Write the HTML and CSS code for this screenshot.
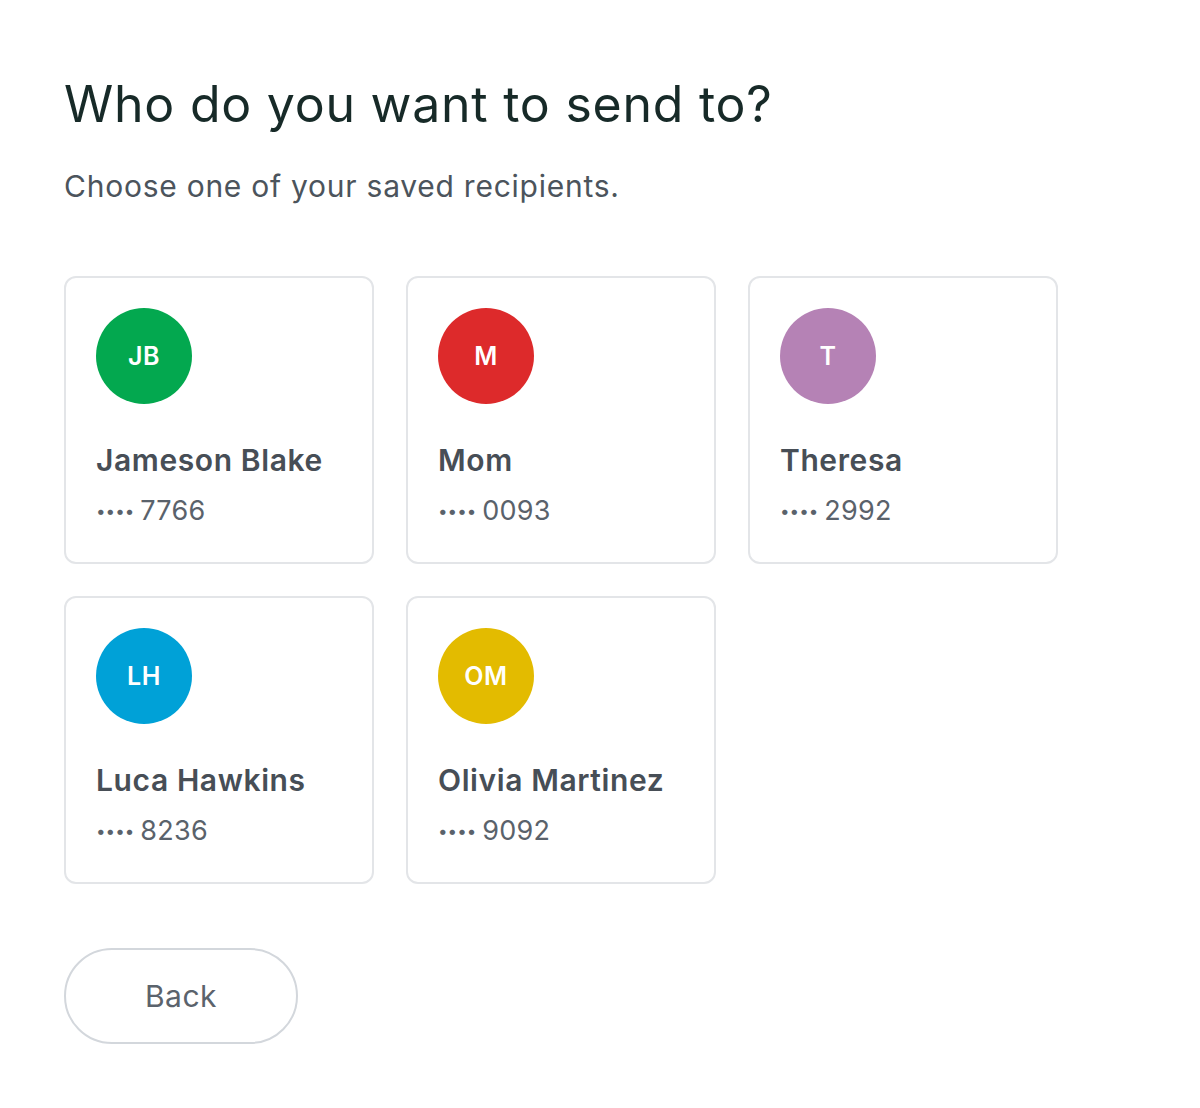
FILE: index.html
```html
<!DOCTYPE html>
<html lang="en">
<head>
<meta charset="utf-8">
<title>Who do you want to send to?</title>
<link rel="stylesheet" href="styles.css">
</head>
<body>
<main class="page">
  <h1 class="title">Who do you want to send to?</h1>
  <p class="subtitle">Choose one of your saved recipients.</p>
  <div class="grid">
    <button class="card">
      <span class="avatar green">JB</span>
      <span class="name">Jameson Blake</span>
      <span class="acct"><span class="dots">••••</span> 7766</span>
    </button>
    <button class="card">
      <span class="avatar red">M</span>
      <span class="name">Mom</span>
      <span class="acct"><span class="dots">••••</span> 0093</span>
    </button>
    <button class="card">
      <span class="avatar purple">T</span>
      <span class="name">Theresa</span>
      <span class="acct"><span class="dots">••••</span> 2992</span>
    </button>
    <button class="card">
      <span class="avatar blue">LH</span>
      <span class="name">Luca Hawkins</span>
      <span class="acct"><span class="dots">••••</span> 8236</span>
    </button>
    <button class="card">
      <span class="avatar yellow">OM</span>
      <span class="name">Olivia Martinez</span>
      <span class="acct"><span class="dots">••••</span> 9092</span>
    </button>
  </div>
  <button class="back">Back</button>
</main>
</body>
</html>
```
FILE: styles.css
```css
* { box-sizing: border-box; }
html, body { margin: 0; background: #ffffff; }
body {
  font-family: Inter, "Noto Sans", "Liberation Sans", sans-serif;
  color: #1a2b2b;
}
.page {
  padding: 72px 64px 64px;
}
.title {
  margin: 0;
  font-size: 50px;
  line-height: 64px;
  font-weight: 400;
  letter-spacing: 0.75px;
  color: #172a28;
}
.subtitle {
  margin: 30px 0 0;
  font-size: 30px;
  line-height: 40px;
  letter-spacing: 0.75px;
  color: #4c545c;
  font-weight: 400;
}
.grid {
  margin-top: 70px;
  display: grid;
  grid-template-columns: repeat(3, 310px);
  gap: 32px;
}
.card {
  height: 288px;
  border: 2px solid #e3e5e8;
  border-radius: 12px;
  background: #fff;
  padding: 30px;
  display: flex;
  flex-direction: column;
  align-items: flex-start;
  text-align: left;
  font-family: inherit;
  cursor: pointer;
}
.avatar {
  width: 96px;
  height: 96px;
  border-radius: 50%;
  display: flex;
  align-items: center;
  justify-content: center;
  color: #fff;
  font-size: 25px;
  font-weight: 600;
  letter-spacing: 0.5px;
}
.green { background: #03a84f; }
.red { background: #dd2a2b; }
.purple { background: #b582b5; }
.blue { background: #00a1d7; }
.yellow { background: #e3bb00; }
.name {
  margin-top: 38px;
  font-size: 30px;
  line-height: 36px;
  font-weight: 600;
  letter-spacing: 0.6px;
  color: #474e56;
}
.acct {
  margin-top: 15px;
  font-size: 27px;
  line-height: 36px;
  letter-spacing: 0.3px;
  color: #5a626b;
}
.dots {
  font-size: 17px;
  letter-spacing: 0;
  vertical-align: 0.15em;
  margin-right: -2px;
}
.back {
  margin-top: 64px;
  width: 234px;
  height: 96px;
  border: 2px solid #d3d7dc;
  border-radius: 48px;
  background: #fff;
  font-family: inherit;
  font-size: 30px;
  letter-spacing: 0.5px;
  color: #5b636c;
  cursor: pointer;
}
```
